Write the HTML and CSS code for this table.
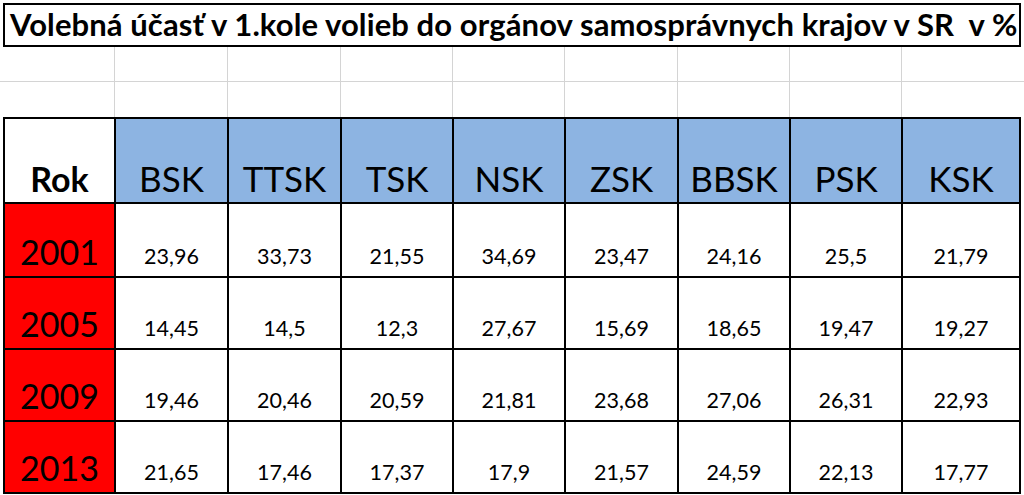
FILE: index.html
```html
<!DOCTYPE html>
<html lang="sk">
<head>
<meta charset="utf-8">
<title>Volebná účasť</title>
<link rel="stylesheet" href="styles.css">
</head>
<body>
<div class="sheet">
  <div class="title"><span>Volebná účasť v 1.kole volieb do orgánov samosprávnych krajov v SR&nbsp; v %</span></div>
  <div class="blank">
    <div></div><div></div><div></div><div></div><div></div><div></div><div></div><div></div><div></div>
    <div></div><div></div><div></div><div></div><div></div><div></div><div></div><div></div><div></div>
  </div>
  <div class="table">
    <div class="cell rok">Rok</div>
    <div class="cell head">BSK</div>
    <div class="cell head">TTSK</div>
    <div class="cell head">TSK</div>
    <div class="cell head">NSK</div>
    <div class="cell head">ZSK</div>
    <div class="cell head">BBSK</div>
    <div class="cell head">PSK</div>
    <div class="cell head">KSK</div>

    <div class="cell year">2001</div>
    <div class="cell val">23,96</div><div class="cell val">33,73</div><div class="cell val">21,55</div><div class="cell val">34,69</div>
    <div class="cell val">23,47</div><div class="cell val">24,16</div><div class="cell val">25,5</div><div class="cell val">21,79</div>

    <div class="cell year">2005</div>
    <div class="cell val">14,45</div><div class="cell val">14,5</div><div class="cell val">12,3</div><div class="cell val">27,67</div>
    <div class="cell val">15,69</div><div class="cell val">18,65</div><div class="cell val">19,47</div><div class="cell val">19,27</div>

    <div class="cell year">2009</div>
    <div class="cell val">19,46</div><div class="cell val">20,46</div><div class="cell val">20,59</div><div class="cell val">21,81</div>
    <div class="cell val">23,68</div><div class="cell val">27,06</div><div class="cell val">26,31</div><div class="cell val">22,93</div>

    <div class="cell year">2013</div>
    <div class="cell val">21,65</div><div class="cell val">17,46</div><div class="cell val">17,37</div><div class="cell val">17,9</div>
    <div class="cell val">21,57</div><div class="cell val">24,59</div><div class="cell val">22,13</div><div class="cell val">17,77</div>
  </div>
</div>
</body>
</html>
```

FILE: styles.css
```css
html, body {
  margin: 0;
  padding: 0;
  background: #ffffff;
}

body {
  font-family: Lato, "Open Sans", "Liberation Sans", sans-serif;
  color: #000000;
  width: 1024px;
  height: 495px;
  overflow: hidden;
}

.sheet {
  padding-top: 3px;
}

.title {
  margin-left: 3px;
  height: 40px;
  width: 1009px;
  border: 2px solid #000;
  display: flex;
  align-items: flex-end;
  padding: 0 0 0 5px;
  box-sizing: content-box;
  font-weight: 700;
  font-size: 31px;
  letter-spacing: 0.1px;
  line-height: 1;
}

.title span {
  padding-bottom: 5px;
  white-space: nowrap;
}

.blank {
  display: grid;
  grid-template-columns: 115px 113px 113px 112px 112px 113px 112px 112px 122px;
  grid-template-rows: 35px 35px;
}

.blank > div {
  border-right: 1px solid #d4d4d4;
  box-sizing: border-box;
}

.blank > div:nth-child(-n+9) {
  border-bottom: 1px solid #d4d4d4;
}

.blank > div:nth-child(9n) {
  border-right: none;
}

.table {
  margin-left: 3px;
  width: 1018px;
  box-sizing: border-box;
  display: grid;
  grid-template-columns: 109px 111px 111px 110px 110px 111px 110px 110px 116px;
  grid-template-rows: 83px 72px 70px 70px 70px;
  gap: 2px;
  background: #000;
  border: 2px solid #000;
}

.cell {
  display: flex;
  align-items: flex-end;
  justify-content: center;
  line-height: 1;
  background: #fff;
  box-sizing: border-box;
}

.rok {
  font-weight: 700;
  font-size: 34px;
  padding-bottom: 6px;
}

.head {
  background: #8db4e2;
  font-size: 35px;
  padding-bottom: 6px;
}

.year {
  background: #ff0000;
  font-size: 34px;
  padding-bottom: 7px;
}

.val {
  font-size: 21.5px;
  padding-bottom: 9px;
}
```
